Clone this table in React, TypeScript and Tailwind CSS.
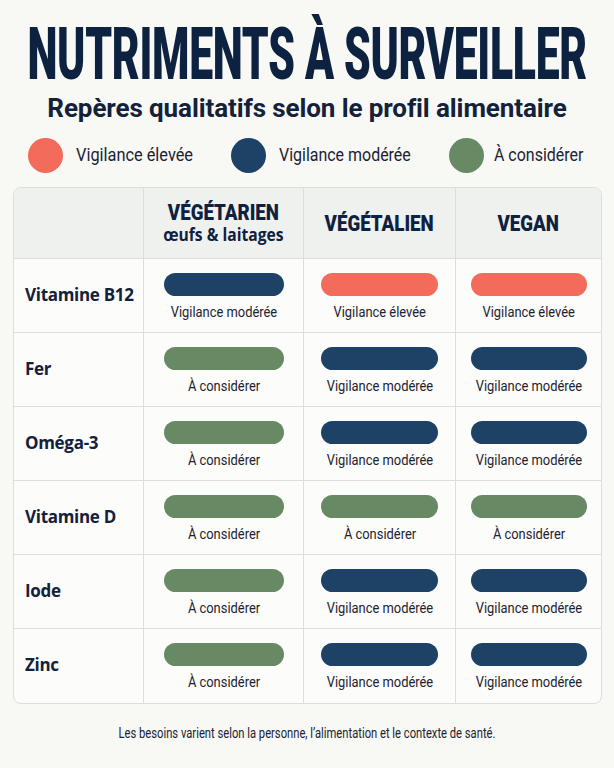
const RED = 'bg-[#f36b5b]';
const NAVY = 'bg-[#1d4266]';
const GREEN = 'bg-[#678a65]';

type Level = 'high' | 'mod' | 'cons';

const LEVELS: Record<Level, { bg: string; label: string }> = {
    high: { bg: RED, label: 'Vigilance élevée' },
    mod: { bg: NAVY, label: 'Vigilance modérée' },
    cons: { bg: GREEN, label: 'À considérer' },
};

const ROWS: { name: string; values: Level[] }[] = [
    { name: 'Vitamine B12', values: ['mod', 'high', 'high'] },
    { name: 'Fer', values: ['cons', 'mod', 'mod'] },
    { name: 'Oméga-3', values: ['cons', 'mod', 'mod'] },
    { name: 'Vitamine D', values: ['cons', 'cons', 'cons'] },
    { name: 'Iode', values: ['cons', 'mod', 'mod'] },
    { name: 'Zinc', values: ['cons', 'mod', 'mod'] },
];

const COLS = ['w-[129px]', 'w-[160px]', 'w-[152px]', 'flex-1'];
const PILL_W = ['w-[120px]', 'w-[117px]', 'w-[116px]'];

const roboto = "font-['Roboto','Liberation_Sans',sans-serif]";
const sans = "font-['Open_Sans','Noto_Sans',sans-serif]";

function Cell({ level, i }: { level: Level; i: number }) {
    const l = LEVELS[level];
    return (
        <div className={`${COLS[i + 1]} border-l border-[#dcdedb] flex flex-col items-center pt-[14px]`}>
            <div className={`${PILL_W[i]} h-[23px] rounded-full ${l.bg}`} />
            <div className={`${roboto} text-[15px] text-[#1c2330] mt-[6px] leading-5 scale-x-[0.86] whitespace-nowrap`}>
                {l.label}
            </div>
        </div>
    );
}

export default function App() {
    return (
        <div className="w-[614px] h-[768px] bg-[#f8f8f5] overflow-hidden text-[#0f2140]">
            {/* Title */}
            <div className="h-[92px] pt-[22px] flex justify-center">
                <h1 className={`${roboto} font-black text-[73px] leading-[64px] scale-x-[0.585] whitespace-nowrap text-[#0d2240] tracking-[-0.5px]`}>
                    NUTRIMENTS À SURVEILLER
                </h1>
            </div>
            <p className={`${roboto} font-bold text-[26px] text-center leading-8 text-[#13213a] tracking-[-0.1px]`}>
                Repères qualitatifs selon le profil alimentaire
            </p>

            {/* Legend */}
            <div className="flex items-center mt-[14px] pl-[28px] h-[35px]">
                {(['high', 'mod', 'cons'] as Level[]).map((k, idx) => (
                    <div key={k} className={`flex items-center ${idx === 0 ? 'w-[203px]' : idx === 1 ? 'w-[218px]' : ''}`}>
                        <div className={`w-[35px] h-[35px] rounded-full ${LEVELS[k].bg}`} />
                        <span
                            className={`${roboto} text-[19px] ${idx === 2 ? 'ml-[10px]' : 'ml-[13px]'} text-[#1b2333] ${idx === 0 ? 'scale-x-[0.86]' : 'scale-x-[0.84]'} origin-left whitespace-nowrap inline-block`}
                        >
                            {LEVELS[k].label}
                        </span>
                    </div>
                ))}
            </div>

            {/* Table */}
            <div className="ml-[13px] mt-[14px] w-[589px] border border-[#dcdedb] rounded-lg overflow-hidden bg-[#fcfcfb]">
                <div className="flex h-[71px] bg-[#eff1ee] border-b border-[#dcdedb]">
                    <div className={COLS[0]} />
                    <div className={`${COLS[1]} border-l border-[#dcdedb] flex flex-col items-center justify-center`}>
                        <div className={`${roboto} font-black text-[22px] leading-6 text-[#0f2140] scale-x-[0.85] whitespace-nowrap`}>VÉGÉTARIEN</div>
                        <div className={`${sans} font-bold text-[17px] leading-5 text-[#0f2140] scale-x-[0.92] whitespace-nowrap`}>œufs &amp; laitages</div>
                    </div>
                    <div className={`${COLS[2]} border-l border-[#dcdedb] flex items-center justify-center`}>
                        <div className={`${roboto} font-black text-[22px] text-[#0f2140] scale-x-[0.85] whitespace-nowrap`}>VÉGÉTALIEN</div>
                    </div>
                    <div className={`${COLS[3]} border-l border-[#dcdedb] flex items-center justify-center`}>
                        <div className={`${roboto} font-black text-[22px] text-[#0f2140] scale-x-[0.85] whitespace-nowrap`}>VEGAN</div>
                    </div>
                </div>
                {ROWS.map((r, ri) => (
                    <div key={r.name} className={`flex h-[74px] ${ri < ROWS.length - 1 ? 'border-b border-[#dcdedb]' : ''}`}>
                        <div className={`${COLS[0]} flex items-center pl-[11px] pb-[2px] ${sans} font-bold text-[17px] text-[#13213a] tracking-[-0.3px]`}>
                            {r.name}
                        </div>
                        {r.values.map((v, i) => (
                            <Cell key={i} level={v} i={i} />
                        ))}
                    </div>
                ))}
            </div>

            <p className={`${roboto} text-center text-[14px] text-[#1b2230] mt-[19px] scale-x-[0.8] whitespace-nowrap`}>
                Les besoins varient selon la personne, l’alimentation et le contexte de santé.
            </p>
        </div>
    );
}
